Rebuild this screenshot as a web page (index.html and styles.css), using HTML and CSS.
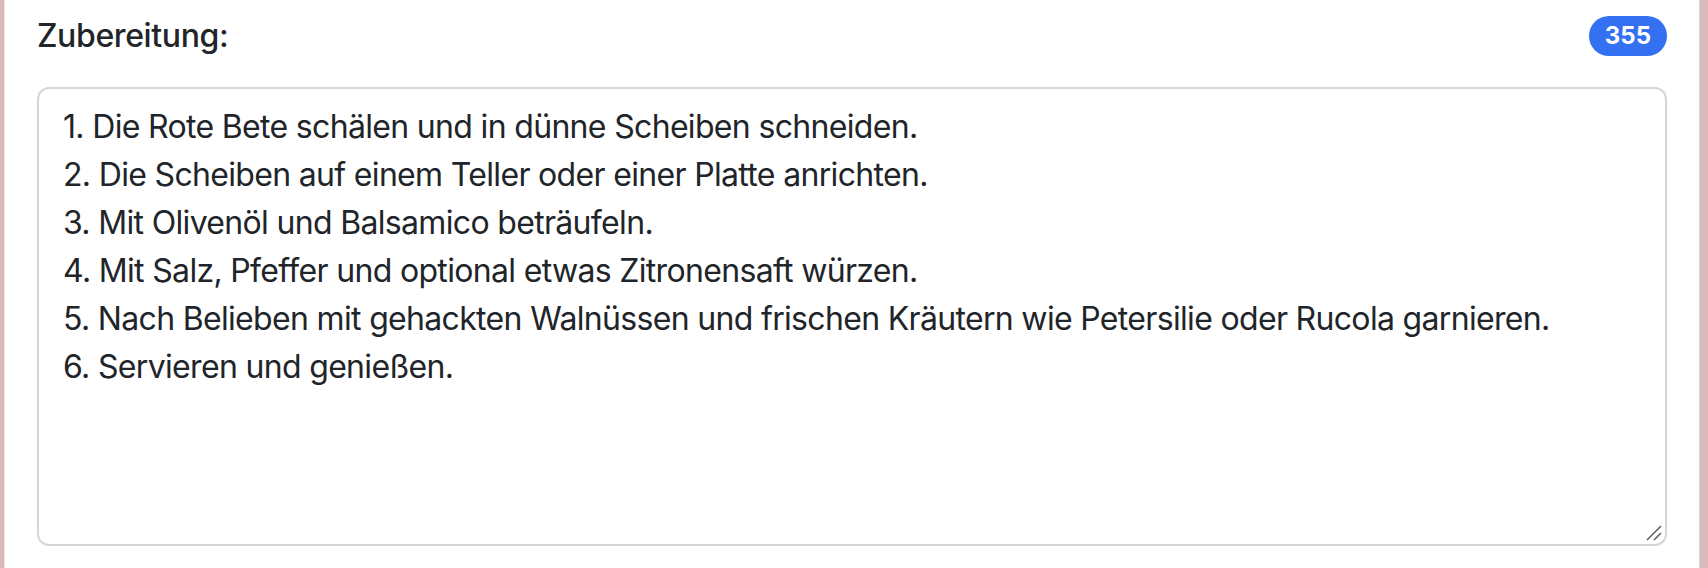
FILE: index.html
```html
<!DOCTYPE html>
<html lang="de">
<head>
<meta charset="utf-8">
<title>Zubereitung</title>
<link rel="stylesheet" href="styles.css">
</head>
<body>
<div class="frame">
  <div class="edge edge-left"></div>
  <main class="panel">
    <div class="field-head">
      <label class="field-label">Zubereitung:</label>
      <span class="badge">355</span>
    </div>
    <div class="textbox">
      <div class="line">1. Die Rote Bete schälen und in dünne Scheiben schneiden.</div>
      <div class="line">2. Die Scheiben auf einem Teller oder einer Platte anrichten.</div>
      <div class="line">3. Mit Olivenöl und Balsamico beträufeln.</div>
      <div class="line">4. Mit Salz, Pfeffer und optional etwas Zitronensaft würzen.</div>
      <div class="line">5. Nach Belieben mit gehackten Walnüssen und frischen Kräutern wie Petersilie oder Rucola garnieren.</div>
      <div class="line">6. Servieren und genießen.</div>
      <svg class="grip" width="18" height="18" viewBox="0 0 18 18" aria-hidden="true">
        <line x1="2" y1="16" x2="16" y2="2" stroke="#5f6368" stroke-width="1.6"/>
        <line x1="9" y1="16" x2="16" y2="9" stroke="#5f6368" stroke-width="1.6"/>
      </svg>
    </div>
  </main>
  <div class="edge edge-right"></div>
</div>
</body>
</html>
```

FILE: styles.css
```css
html, body {
  margin: 0;
  padding: 0;
  background: #ffffff;
}

body {
  font-family: Inter, "Liberation Sans", Arial, sans-serif;
  color: #212529;
}

.frame {
  display: flex;
  width: 1708px;
  height: 568px;
  overflow: hidden;
}

.edge {
  flex: none;
  background: #dcb9ba;
}

.edge-left {
  width: 4px;
  border-right: 1px solid #e4e6e8;
}

.edge-right {
  width: 8px;
  border-left: 1px solid #d4d4d4;
}

.panel {
  flex: 1;
  padding: 0 32px;
  display: flex;
  flex-direction: column;
}

.field-head {
  display: flex;
  align-items: center;
  justify-content: space-between;
  margin-top: 12px;
  height: 48px;
}

.field-label {
  font-size: 32px;
  line-height: 48px;
  font-weight: 500;
  letter-spacing: -0.012em;
}

.badge {
  background: #3370f2;
  color: #ffffff;
  font-size: 24px;
  font-weight: 700;
  line-height: 1;
  padding: 8px 16px;
  border-radius: 40px;
}

.textbox {
  position: relative;
  margin-top: 27px;
  height: 459px;
  box-sizing: border-box;
  border: 2px solid #d3d7db;
  border-radius: 12px;
  padding: 14px 24px;
  font-size: 32px;
  line-height: 48px;
  font-weight: 400;
  letter-spacing: -0.021em;
}

.line {
  white-space: nowrap;
}

.grip {
  position: absolute;
  right: 2px;
  bottom: 2px;
}
```
